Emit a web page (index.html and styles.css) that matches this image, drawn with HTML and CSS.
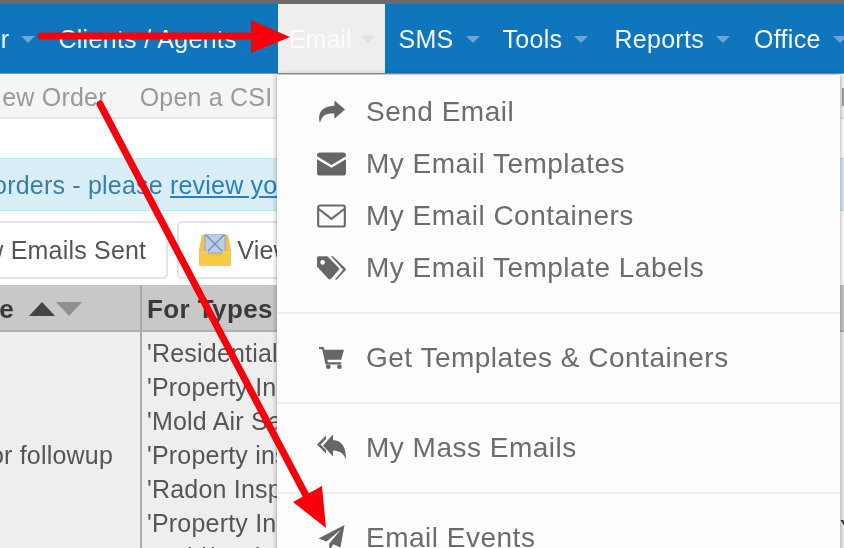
FILE: index.html
```html
<!DOCTYPE html>
<html lang="en">
<head>
<meta charset="utf-8">
<title>Email menu</title>
<link rel="stylesheet" href="styles.css">
</head>
<body>
<div class="shot">
  <div class="page">
    <div class="strip"></div>
    <nav class="nav">
      <a class="nav-item">Order</a>
      <a class="nav-item wide">Clients / Agents</a>
      <a class="nav-item active">Email</a>
      <a class="nav-item">SMS</a>
      <a class="nav-item wider">Tools</a>
      <a class="nav-item wide">Reports</a>
      <a class="nav-item">Office</a>
    </nav>
    <div class="subbar">
      <a class="sub-link">New Order</a>
      <a class="sub-link">Open a CSI</a>
      <a class="sub-link sub-far">Help</a>
    </div>
    <div class="alert">You have orders - please <a class="alert-link">review your orders now</a></div>
    <div class="buttons">
      <a class="btn">View Emails Sent</a>
      <a class="btn">
        <svg class="btn-icon" viewBox="0 0 32 32" aria-hidden="true">
          <path d="M3 1h26l3 15v14a2 2 0 0 1-2 2H2a2 2 0 0 1-2-2V16z" fill="#f2c14e"/>
          <path d="M6 0h20v19H6z" fill="#b9cfe8" stroke="#8fa6c8"/>
          <path d="M7 1l9 9 9-9M7 19l9-9 9 9" fill="none" stroke="#7f93b8" stroke-width="1.500"/>
          <path d="M0 17h9v5h14v-5h9v13a2 2 0 0 1-2 2H2a2 2 0 0 1-2-2z" fill="#f7cb45"/>
        </svg>
        View Emails Queued
      </a>
    </div>
    <table class="grid">
      <thead>
        <tr>
          <th class="col-name">Name<span class="sort"><i class="up"></i><i class="down"></i></span></th>
          <th class="col-types">For Types</th>
          <th class="col-extra"></th>
        </tr>
      </thead>
      <tbody>
        <tr>
          <td class="col-name">Inspector followup</td>
          <td class="col-types">
            'Residential Inspection'<br>
            'Property Inspection'<br>
            'Mold Air Sampling'<br>
            'Property inspection'<br>
            'Radon Inspection'<br>
            'Property Inspection'<br>
            'Mold/Radon'
          </td>
          <td class="col-extra">Yes</td>
        </tr>
      </tbody>
    </table>
  </div>

  <div class="menu">
    <a class="menu-item">
      <svg class="mi" viewBox="0 0 30 26"><path d="M18 1l11 9.500L18 20v-5.500C10 14 5 16 3 24.500 0 14 5 7 18 6.500z"/></svg>
      Send Email
    </a>
    <a class="menu-item">
      <svg class="mi" viewBox="0 0 30 24"><path d="M3 0h24a3 3 0 0 1 3 3v1L15 13 0 4V3a3 3 0 0 1 3-3zM0 7l15 9 15-9v14a3 3 0 0 1-3 3H3a3 3 0 0 1-3-3z"/></svg>
      My Email Templates
    </a>
    <a class="menu-item">
      <svg class="mi" viewBox="0 0 30 24"><path d="M3 1.200h24A1.800 1.800 0 0 1 28.800 3v18a1.800 1.800 0 0 1-1.800 1.800H3A1.800 1.800 0 0 1 1.200 21V3A1.800 1.800 0 0 1 3 1.200zM1.500 4.500L15 15 28.500 4.500" fill="none" stroke="#6a6a6a" stroke-width="2.200"/></svg>
      My Email Containers
    </a>
    <a class="menu-item">
      <svg class="mi" viewBox="0 0 31 25"><path d="M2 0h9l12 12a2 2 0 0 1 0 3l-8 9a2 2 0 0 1-3 0L0 11V2a2 2 0 0 1 2-2zm4 4a2.500 2.500 0 1 0 .01 0z" fill-rule="evenodd"/><path d="M15 0h2l13 12.500a2 2 0 0 1 0 3L21 25h-2l9-10.500z"/></svg>
      My Email Template Labels
    </a>
    <hr class="menu-rule">
    <a class="menu-item">
      <svg class="mi mi-small" viewBox="0 0 27 24"><path d="M0 0h5l1 3h21l-3 11H9l.5 2.500H24V19H7L3.500 2.500H0z"/><circle cx="10" cy="21.500" r="2.500"/><circle cx="22" cy="21.500" r="2.500"/></svg>
      Get Templates &amp; Containers
    </a>
    <hr class="menu-rule">
    <a class="menu-item">
      <svg class="mi" viewBox="0 0 29 25"><path d="M9 0v3.500L3.500 9 9 14.500V18L0 9z"/><path d="M16 0v5.500C24 6 29 11 29 25c-2.500-6.500-6-8.500-13-9v6L6 11z" transform="translate(0 -1)"/></svg>
      My Mass Emails
    </a>
    <hr class="menu-rule">
    <a class="menu-item">
      <svg class="mi" viewBox="0 0 29 29"><path d="M29 0l-4.500 25-8-3.500L12 29v-8.500L25 5 9 18.500 0 15z"/></svg>
      Email Events
    </a>
  </div>

  <svg class="arrows" viewBox="0 0 844 548" aria-hidden="true">
    <path d="M41 36H256M100 104L311 505" fill="none" stroke="#f7000b" stroke-width="7" stroke-linecap="round"/>
    <path d="M251 20L290 37 251 53zM293 502L322 486 326 528z" fill="#f7000b"/>
  </svg>
</div>
</body>
</html>
```

FILE: styles.css
```css
html, body {
  margin: 0;
  height: 548px;
  overflow: hidden;
  background: #fff;
}

.shot {
  position: relative;
  width: 844px;
  height: 548px;
  overflow: hidden;
  filter: blur(0.7px);
  font-family: "Liberation Sans", Arial, sans-serif;
  letter-spacing: 0.2px;
}

.page {
  width: 964px;
  margin-left: -120px;
  display: flex;
  flex-direction: column;
}

.strip {
  height: 4px;
  background: #6a6a6a;
}

.nav {
  display: flex;
  height: 70px;
  background: #0f75bc;
  padding-left: 52px;
  box-sizing: border-box;
  border-bottom: 1px solid #5fa4d4;
  letter-spacing: 0.3px;
}

.nav-item {
  display: flex;
  align-items: center;
  padding: 2px 11px 0 12px;
  color: #f2f8fc;
  font-size: 25px;
  white-space: nowrap;
}

.nav-item::after {
  content: "";
  margin: 0 0 0 12px;
  border-top: 7px solid #6da6d2;
  border-left: 7.500px solid transparent;
  border-right: 7.500px solid transparent;
}

.nav-item.wide {
  padding-right: 12px;
}

.nav-item.wider {
  padding-right: 14px;
}

.nav-item.active {
  margin: 0 1px 0 3px;
  padding: 2px 10px 0 11px;
  background: #eeeeee;
  color: #fbfbfb;
  letter-spacing: 0;
}

.nav-item.active::after {
  margin-left: 10px;
  border-top-color: #e2e2e2;
}

.subbar {
  display: flex;
  height: 45px;
  box-sizing: border-box;
  align-items: center;
  gap: 33px;
  padding: 3px 0 0 104px;
  background: #f5f5f5;
  border-bottom: 2px solid #e6e6e6;
  font-size: 25px;
  color: #9a9a9a;
  white-space: nowrap;
}

.sub-far {
  position: absolute;
  left: 840px;
}

.alert {
  margin-top: 39px;
  height: 53px;
  box-sizing: border-box;
  padding-left: 1px;
  background: #d9edf7;
  border-top: 1px solid #bce8f1;
  border-bottom: 1px solid #bce8f1;
  font-size: 25px;
  line-height: 53px;
  color: #3a7ea6;
  white-space: nowrap;
}

.alert-link {
  color: #2a7fc0;
  text-decoration: underline;
}

.buttons {
  display: flex;
  gap: 9px;
  margin-top: 10px;
  padding-left: 47px;
}

.btn {
  display: flex;
  align-items: center;
  gap: 6px;
  height: 58px;
  box-sizing: border-box;
  padding: 0 20px;
  border: 2px solid #e4e4e4;
  border-radius: 5px;
  background: #fff;
  font-size: 25px;
  color: #555;
  white-space: nowrap;
}

.btn-icon {
  width: 32px;
  height: 32px;
  flex: none;
}

.grid {
  margin-top: 6px;
  width: 964px;
  border-collapse: collapse;
  table-layout: fixed;
}

.grid th {
  height: 46px;
  padding: 3px 5px 0;
  box-sizing: border-box;
  background: #c8c8c8;
  border-bottom: 2px solid #b0b0b0;
  text-align: left;
  font-size: 26px;
  letter-spacing: 0.4px;
  color: #3a3a3a;
  white-space: nowrap;
}

.grid td {
  padding: 4px 5px 5px;
  background: #eeeeee;
  font-size: 25px;
  line-height: 34px;
  color: #555;
  white-space: nowrap;
}

.grid .col-name {
  width: 261px;
  box-sizing: border-box;
  border-right: 2px solid #aaa;
  text-align: right;
  padding-right: 27px;
}

.grid th.col-name {
  padding-right: 58px;
}

.grid .col-types {
  width: 694px;
  box-sizing: border-box;
}

.grid td.col-extra {
  padding: 180px 0 0 5px;
  vertical-align: top;
  color: #333;
}

.sort {
  display: inline-flex;
  gap: 1px;
  margin-left: 15px;
  vertical-align: 2px;
}

.sort i {
  border-left: 13px solid transparent;
  border-right: 13px solid transparent;
}

.sort .up {
  border-bottom: 14px solid #444;
}

.sort .down {
  border-top: 14px solid #909090;
}

.menu {
  position: absolute;
  left: 277px;
  top: 75px;
  width: 563px;
  height: 500px;
  box-sizing: border-box;
  padding-top: 11px;
  background: #fdfdfd;
  box-shadow: 0 0 5px rgba(0, 0, 0, 0.4);
}

.menu-item {
  display: flex;
  align-items: center;
  height: 52px;
  padding-left: 40px;
  gap: 20px;
  font-size: 28px;
  letter-spacing: 0.5px;
  color: #6c6c6c;
  white-space: nowrap;
}

.mi {
  width: 29px;
  height: 26px;
  flex: none;
  fill: #666;
}

.mi-small {
  padding: 1px 2px;
  box-sizing: border-box;
}

.menu-rule {
  height: 2px;
  margin: 18px 0;
  border: 0;
  background: #eeeeee;
}

.arrows {
  position: absolute;
  left: 0;
  top: 0;
  width: 844px;
  height: 548px;
}
```
